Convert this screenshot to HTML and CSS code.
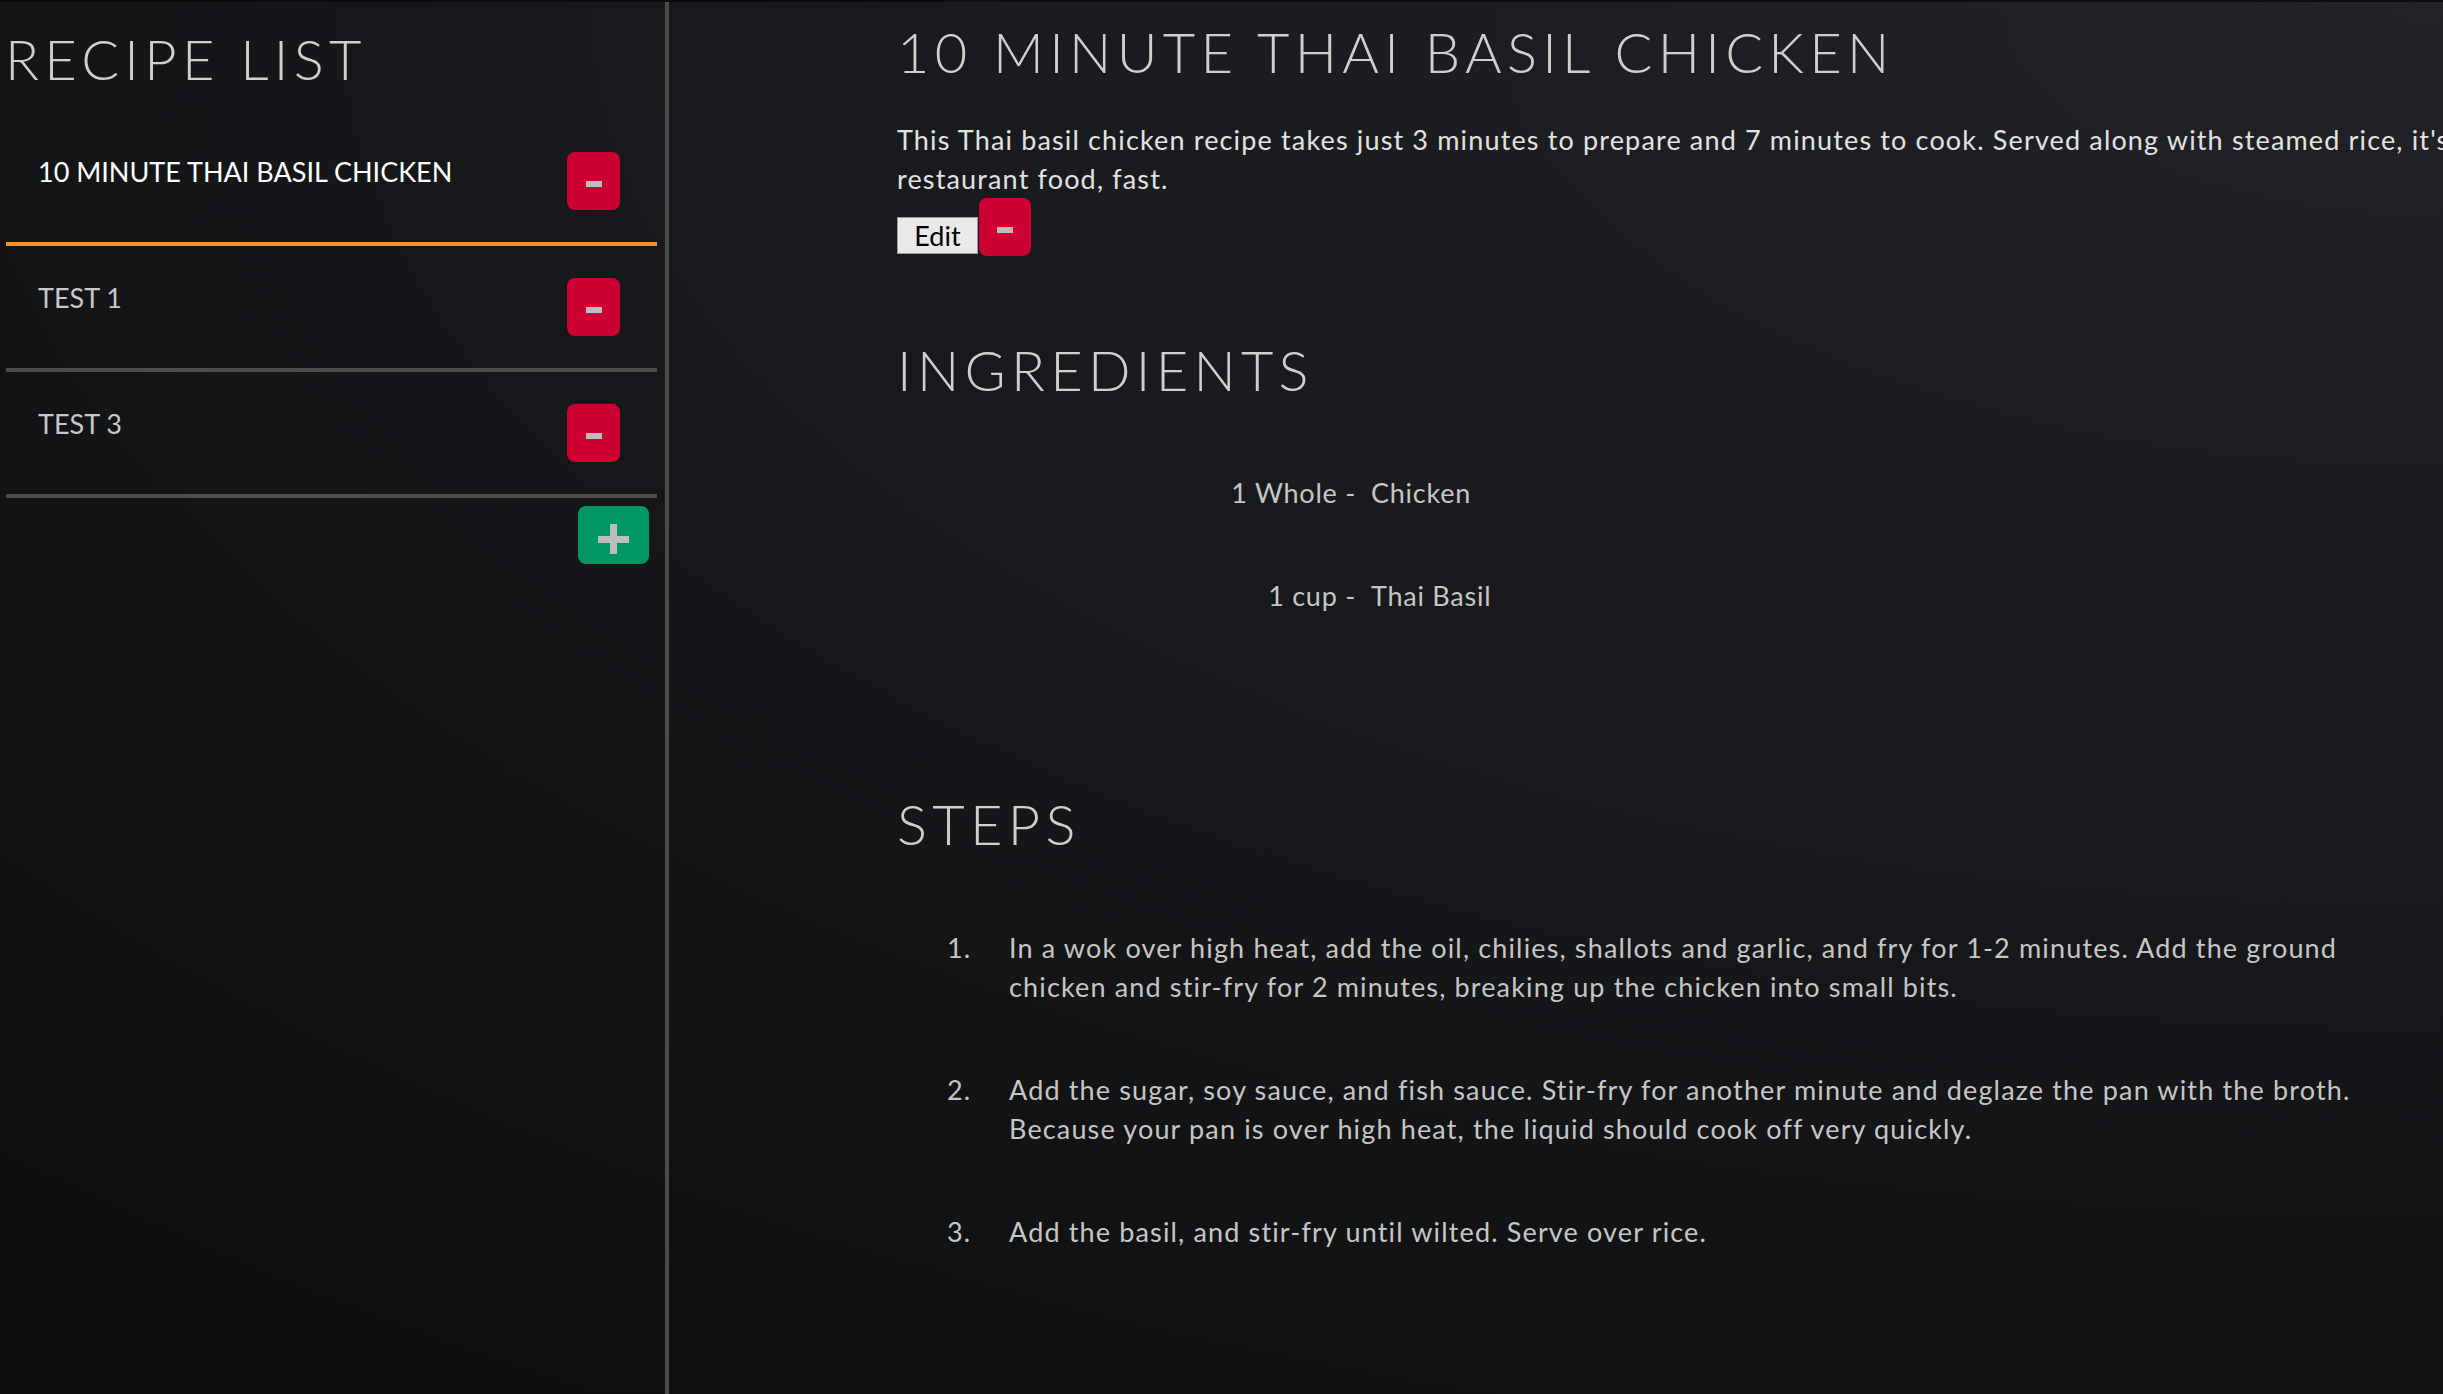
FILE: index.html
```html
<!DOCTYPE html>
<html lang="en">
<head>
<meta charset="utf-8">
<title>Recipe Box</title>
<link rel="stylesheet" href="styles.css">
</head>
<body>
<div class="app">
  <aside class="sidebar">
    <h1 class="list-title">RECIPE LIST</h1>
    <ul class="recipes">
      <li class="recipe active">
        <span class="recipe-name">10 MINUTE THAI BASIL CHICKEN</span>
        <button class="btn-del" aria-label="Delete"><svg width="16" height="6" viewBox="0 0 16 6"><rect width="16" height="6" fill="#bdbdbd"/></svg></button>
      </li>
      <li class="recipe">
        <span class="recipe-name">TEST 1</span>
        <button class="btn-del" aria-label="Delete"><svg width="16" height="6" viewBox="0 0 16 6"><rect width="16" height="6" fill="#bdbdbd"/></svg></button>
      </li>
      <li class="recipe">
        <span class="recipe-name">TEST 3</span>
        <button class="btn-del" aria-label="Delete"><svg width="16" height="6" viewBox="0 0 16 6"><rect width="16" height="6" fill="#bdbdbd"/></svg></button>
      </li>
    </ul>
    <div class="add-row">
      <button class="btn-add" aria-label="Add recipe"><svg width="31" height="30" viewBox="0 0 31 30"><rect x="0" y="12" width="31" height="7" fill="#bdbdbd"/><rect x="12" y="0" width="7" height="30" fill="#bdbdbd"/></svg></button>
    </div>
  </aside>
  <main class="detail">
    <h1 class="title">10 MINUTE THAI BASIL CHICKEN</h1>
    <p class="desc">This Thai basil chicken recipe takes just 3 minutes to prepare and 7 minutes to cook. Served along with steamed rice, it's restaurant food, fast.</p>
    <div class="actions">
      <button class="btn-edit">Edit</button>
      <button class="btn-del btn-del-main" aria-label="Delete"><svg width="16" height="6" viewBox="0 0 16 6"><rect width="16" height="6" fill="#bdbdbd"/></svg></button>
    </div>
    <h2 class="section ingredients-title">INGREDIENTS</h2>
    <ul class="ingredients">
      <li class="ingredient"><span class="qty">1 Whole -</span><span class="ing-name">Chicken</span></li>
      <li class="ingredient"><span class="qty">1 cup -</span><span class="ing-name">Thai Basil</span></li>
    </ul>
    <h2 class="section steps-title">STEPS</h2>
    <ol class="steps">
      <li class="step"><span class="num">1.</span><span class="step-text">In a wok over high heat, add the oil, chilies, shallots and garlic, and fry for 1-2 minutes. Add the ground chicken and stir-fry for 2 minutes, breaking up the chicken into small bits.</span></li>
      <li class="step"><span class="num">2.</span><span class="step-text">Add the sugar, soy sauce, and fish sauce. Stir-fry for another minute and deglaze the pan with the broth. Because your pan is over high heat, the liquid should cook off very quickly.</span></li>
      <li class="step"><span class="num">3.</span><span class="step-text">Add the basil, and stir-fry until wilted. Serve over rice.</span></li>
    </ol>
  </main>
</div>
</body>
</html>
```

FILE: styles.css
```css
html, body {
  margin: 0;
  padding: 0;
  height: 100%;
}

body {
  overflow: hidden;
  font-family: Lato, "Open Sans", sans-serif;
  font-size: 27px;
  line-height: 39px;
  letter-spacing: 1.15px;
  color: #c6c6c6;
  background: radial-gradient(ellipse 140% 120% at 100% 0%, #222327 0%, #1b1c1f 35%, #141517 70%, #0e0f0f 100%);
  border-top: 2px solid #0b0c0e;
  box-sizing: border-box;
}

.app {
  display: flex;
  height: 100%;
}

/* ---------- sidebar ---------- */
.sidebar {
  width: 669px;
  flex: 0 0 669px;
  box-sizing: border-box;
  border-right: 4px solid #4b4b4b;
}

.list-title,
.title,
.section {
  font-family: Lato, "Open Sans", sans-serif;
  font-weight: 300;
  font-size: 56px;
  line-height: 1.2;
  letter-spacing: 5.3px;
  color: #cfcfcf;
  margin: 0;
}

.list-title {
  margin-top: 23px;
  padding-left: 5px;
}

.recipes {
  list-style: none;
  margin: 28px 0 0 6px;
  padding: 0;
  width: 651px;
}

.recipe {
  display: flex;
  justify-content: space-between;
  align-items: flex-start;
  padding: 32px 37px 32px 32px;
  border-bottom: 4px solid #4d4d4d;
}

.recipe.active {
  border-bottom-color: #f39326;
}

.recipe-name {
  color: #c8c8c8;
  letter-spacing: 0;
}

.recipe.active .recipe-name {
  color: #ffffff;
}

.btn-del {
  width: 53px;
  height: 58px;
  border: none;
  border-radius: 8px;
  background: #cc0033;
  padding: 29px 0 0 0;
  display: flex;
  justify-content: center;
  align-items: flex-start;
  cursor: pointer;
}

.btn-del svg {
  display: block;
}

.add-row {
  display: flex;
  justify-content: flex-end;
  width: 651px;
  margin-left: 6px;
  margin-top: 8px;
}

.btn-add {
  width: 71px;
  height: 58px;
  margin-right: 8px;
  border: none;
  border-radius: 8px;
  background: #009664;
  padding: 18px 0 0 0;
  display: flex;
  justify-content: center;
  align-items: flex-start;
}

.btn-add svg {
  display: block;
}

/* ---------- detail ---------- */
.detail {
  flex: 1;
  min-width: 0;
  padding: 16px 0 0 228px;
}

.desc {
  width: 1600px;
  margin: 35px 0 0 0;
  color: #e2e2e2;
}

.actions {
  display: flex;
  align-items: flex-end;
  gap: 1px;
  height: 58px;
}

.btn-edit {
  height: 37px;
  width: 81px;
  margin-bottom: 2px;
  padding: 0;
  box-sizing: border-box;
  border: 1px solid #9c9c9c;
  background: #e9e9e9;
  color: #000;
  font-family: Lato, "Open Sans", sans-serif;
  font-size: 27px;
  line-height: 35px;
  letter-spacing: 0;
}

.btn-del-main {
  width: 52px;
  padding-top: 29px;
}

.ingredients-title {
  margin-top: 80px;
}

.ingredients {
  list-style: none;
  margin: 70px 0 0 0;
  padding: 0;
}

.ingredient {
  display: grid;
  grid-template-columns: 459px auto;
  column-gap: 15px;
  margin-bottom: 64px;
  letter-spacing: 0.75px;
}

.ingredient:last-child {
  margin-bottom: 0;
}

.qty {
  text-align: right;
}

.steps-title {
  margin-top: 175px;
}

.steps {
  list-style: none;
  margin: 70px 0 0 50px;
  padding: 0;
  width: 1450px;
}

.step {
  display: flex;
  margin-bottom: 64px;
}

.num {
  flex: 0 0 62px;
}

.step-text {
  flex: 1;
}
```
